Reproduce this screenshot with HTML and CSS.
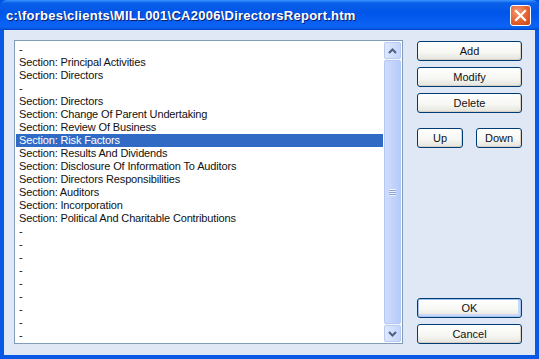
FILE: index.html
```html
<!DOCTYPE html>
<html lang="en">
<head>
    <meta charset="UTF-8">
    <title>DirectorsReport.htm</title>
    <link rel="stylesheet" href="styles.css">
</head>
<body>
    <div class="window">
        <!-- TITLE BAR -->
        <div class="titlebar">
            <span class="title">c:\forbes\clients\MILL001\CA2006\DirectorsReport.htm</span>
            <button class="close-btn" aria-label="Close">
                <svg width="13" height="13" viewBox="0 0 13 13">
                    <path d="M2 2 L11 11 M11 2 L2 11" stroke="#fff" stroke-width="2.2" stroke-linecap="square"/>
                </svg>
            </button>
        </div>
        <!-- CLIENT AREA -->
        <div class="client">
            <div class="listbox">
                <ul class="items">
                    <li>-</li>
                    <li>Section: Principal Activities</li>
                    <li>Section: Directors</li>
                    <li>-</li>
                    <li>Section: Directors</li>
                    <li>Section: Change Of Parent Undertaking</li>
                    <li>Section: Review Of Business</li>
                    <li class="selected">Section: Risk Factors</li>
                    <li>Section: Results And Dividends</li>
                    <li>Section: Disclosure Of Information To Auditors</li>
                    <li>Section: Directors Responsibilities</li>
                    <li>Section: Auditors</li>
                    <li>Section: Incorporation</li>
                    <li>Section: Political And Charitable Contributions</li>
                    <li>-</li>
                    <li>-</li>
                    <li>-</li>
                    <li>-</li>
                    <li>-</li>
                    <li>-</li>
                    <li>-</li>
                    <li>-</li>
                    <li>-</li>
                </ul>
                <div class="scrollbar">
                    <div class="sb-btn">
                        <svg width="9" height="6" viewBox="0 0 9 6"><path d="M1 5 L4.5 1.5 L8 5" fill="none" stroke="#4d6185" stroke-width="2"/></svg>
                    </div>
                    <div class="sb-thumb">
                        <span class="grip"></span>
                    </div>
                    <div class="sb-btn">
                        <svg width="9" height="6" viewBox="0 0 9 6"><path d="M1 1 L4.5 4.5 L8 1" fill="none" stroke="#4d6185" stroke-width="2"/></svg>
                    </div>
                </div>
            </div>
            <div class="buttons">
                <button class="btn">Add</button>
                <button class="btn">Modify</button>
                <button class="btn">Delete</button>
                <div class="move-row">
                    <button class="btn small">Up</button>
                    <button class="btn small">Down</button>
                </div>
                <div class="bottom">
                    <button class="btn default">OK</button>
                    <button class="btn">Cancel</button>
                </div>
            </div>
        </div>
    </div>
</body>
</html>
```

FILE: styles.css
```css
*{
    margin:0;
    padding:0;
    box-sizing: border-box;
}
body{
    width:539px;
    height:359px;
    overflow: hidden;
    font-family: "Liberation Sans", Arial, sans-serif;
    font-size: 11px;
    background-color: #0054e3;
}
/* WINDOW */
.window{
    width:539px;
    height:359px;
    display:flex;
    flex-direction: column;
    background-color: #0a58e6;
    border-radius: 7px 7px 0 0;
    overflow: hidden;
}
/* TITLE BAR */
.titlebar{
    height:30px;
    display:flex;
    align-items: center;
    justify-content: space-between;
    padding:0 8px 0 6px;
    background: linear-gradient(#3d95ff 0, #0a5fe8 10%, #0055ea 45%, #0b63f5 85%, #0a5de8 94%, #0040c8 100%);
}
.title{
    color:white;
    font-weight: bold;
    font-size: 13px;
    letter-spacing: 0.25px;
    text-shadow: 1px 1px 0 #0a1e6e;
}
.close-btn{
    width:21px;
    height:21px;
    border:1px solid white;
    border-radius: 3px;
    background: radial-gradient(circle at 35% 30%, #f39a74 0, #e5602f 55%, #c8441a 100%);
    display:flex;
    align-items: center;
    justify-content: center;
}
/* CLIENT AREA */
.client{
    flex:1;
    margin:0 4px 4px 4px;
    background-color: #e1e8f5;
    display:flex;
    padding:10px 13px 11px 10px;
    gap:14px;
}
/* LISTBOX */
.listbox{
    width:389px;
    height:304px;
    border:1px solid #7f9db9;
    background-color: white;
    padding:1px;
    display:flex;
}
.items{
    list-style: none;
    flex:1;
    padding-top:1px;
}
.items li{
    height:13px;
    line-height: 13px;
    padding-left:3px;
    margin-right:1px;
    color:#111;
    white-space: nowrap;
    font-size: 11px;
    letter-spacing: -0.15px;
}
.items li.selected{
    background-color: #316ac5;
    color:white;
}
/* SCROLLBAR */
.scrollbar{
    width:17px;
    display:flex;
    flex-direction: column;
    background-color: #f3f4f8;
}
.sb-btn{
    height:17px;
    display:flex;
    align-items: center;
    justify-content: center;
    border:1px solid #b9cbf3;
    border-radius: 2px;
    background: linear-gradient(90deg, #dfe8fe, #c5d5fc);
}
.sb-thumb{
    flex:1;
    margin:1px 0;
    border:1px solid #b4c8f6;
    border-radius: 2px;
    background: linear-gradient(90deg, #d0dcfd, #c0d2fb 60%, #b6cbf8);
    display:flex;
    align-items: center;
    justify-content: center;
}
.grip{
    width:7px;
    height:7px;
    background: repeating-linear-gradient(#eef3ff 0 1px, #8ca6dc 1px 2px);
}
/* BUTTONS */
.buttons{
    width:105px;
    display:flex;
    flex-direction: column;
    gap:6px;
    padding-top:1px;
}
.btn{
    height:20px;
    width:100%;
    border:1px solid #003c74;
    border-radius: 3px;
    background: linear-gradient(#ffffff 0, #f6f6f2 60%, #e4e3dc 100%);
    box-shadow: inset -1px -1px 0 #d6d0c5;
    font-family: "Liberation Sans", Arial, sans-serif;
    font-size: 11px;
    font-weight: normal;
    color:#111;
}
.move-row{
    display:flex;
    justify-content: space-between;
    margin-top:9px;
}
.btn.small{
    width:46px;
}
.bottom{
    margin-top:auto;
    display:flex;
    flex-direction: column;
    gap:6px;
}
.btn.default{
    box-shadow: inset 0 0 0 1px #a4c2f2, inset -1px -1px 0 2px #c8d8f5;
}
```
